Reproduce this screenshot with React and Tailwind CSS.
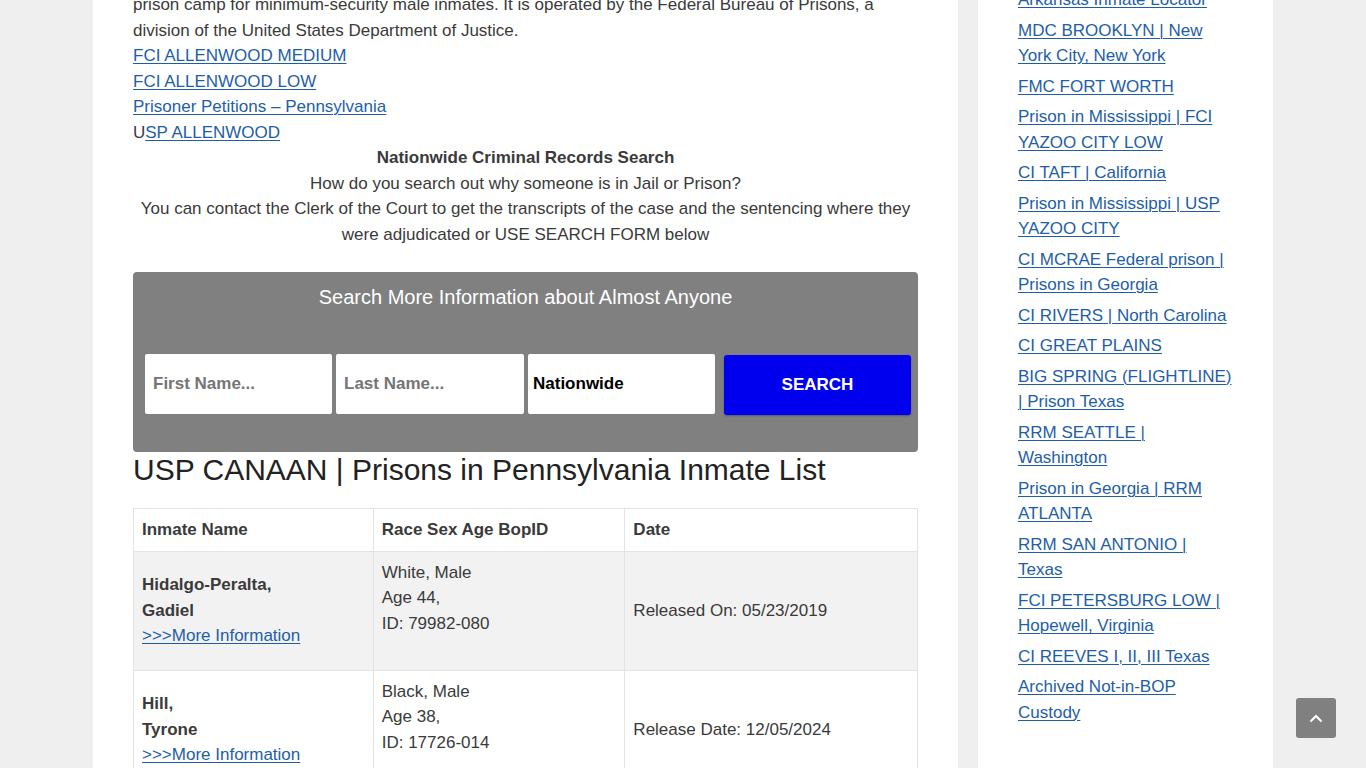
import React from "react";

const sideLinks = [
  "Arkansas Inmate Locator",
  "MDC BROOKLYN | New York City, New York",
  "FMC FORT WORTH",
  "Prison in Mississippi | FCI YAZOO CITY LOW",
  "CI TAFT | California",
  "Prison in Mississippi | USP YAZOO CITY",
  "CI MCRAE Federal prison | Prisons in Georgia",
  "CI RIVERS | North Carolina",
  "CI GREAT PLAINS",
  "BIG SPRING (FLIGHTLINE) | Prison Texas",
  "RRM SEATTLE | Washington",
  "Prison in Georgia | RRM ATLANTA",
  "RRM SAN ANTONIO | Texas",
  "FCI PETERSBURG LOW | Hopewell, Virginia",
  "CI REEVES I, II, III Texas",
  "Archived Not-in-BOP Custody",
];

const rows = [
  {
    last: "Hidalgo-Peralta,",
    first: "Gadiel",
    race: "White, Male",
    age: "Age 44,",
    id: "ID: 79982-080",
    date: "Released On: 05/23/2019",
    bg: "bg-[#f2f2f2]",
  },
  {
    last: "Hill,",
    first: "Tyrone",
    race: "Black, Male",
    age: "Age 38,",
    id: "ID: 17726-014",
    date: "Release Date: 12/05/2024",
    bg: "bg-white",
  },
];

function A({ children }) {
  return (
    <a href="#" className="text-[#1e5ea8] underline underline-offset-[2px] decoration-1">
      {children}
    </a>
  );
}

export default function App() {
  return (
    <div
      className="min-h-screen h-[768px] overflow-hidden bg-[#efefef] text-[17px] leading-[25.5px] text-[#3a3a3a]"
      style={{ fontFamily: '"Liberation Sans", Arial, sans-serif' }}
    >
      <div className="flex gap-[20px] pl-[93px] h-full">
        {/* main column */}
        <main className="w-[865px] shrink-0 bg-white px-[40px] h-full">
          <div className="-mt-[8px]">
            <p>
              prison camp for minimum-security male inmates. It is operated by the Federal Bureau of
              Prisons, a division of the United States Department of Justice.
              <br />
              <A>FCI ALLENWOOD MEDIUM </A>
              <br />
              <A>FCI ALLENWOOD LOW</A>
              <br />
              <A>Prisoner Petitions – Pennsylvania</A>
              <br />
              U<A>SP ALLENWOOD</A>
            </p>
            <div className="text-center">
              <strong className="font-bold">Nationwide Criminal Records Search</strong>
              <br />
              How do you search out why someone is in Jail or Prison?
              <br />
              You can contact the Clerk of the Court to get the transcripts of the case and the
              sentencing where they were adjudicated or USE SEARCH FORM below
            </div>

            {/* search box */}
            <div className="mt-[25px] h-[180px] bg-[#808080] rounded-[4px] pt-[12px] pl-[12px]">
              <div className="text-center text-white text-[20px] leading-[26px] pr-[12px]">
                Search More Information about Almost Anyone
              </div>
              <div className="flex mt-[44px] items-start">
                <div className="w-[187px] h-[60px] bg-white rounded-[2px] flex items-center pl-[8px] font-bold text-[#757575]">
                  First Name...
                </div>
                <div className="ml-[4px] w-[188px] h-[60px] bg-white rounded-[2px] flex items-center pl-[8px] font-bold text-[#757575]">
                  Last Name...
                </div>
                <div className="ml-[4px] w-[187px] h-[60px] bg-white rounded-[2px] flex items-center pl-[5px] font-bold text-black">
                  Nationwide
                </div>
                <button className="ml-[9px] mt-[1px] w-[187px] h-[60px] bg-[#0000ee] rounded-[3px] text-white font-bold text-[17px] shadow-[0_1px_2px_rgba(0,0,0,0.3)]">
                  SEARCH
                </button>
              </div>
            </div>

            <h1 className="text-[30px] leading-[36px] text-[#222] font-normal">
              USP CANAAN | Prisons in Pennsylvania Inmate List
            </h1>

            <table className="mt-[20px] w-[785px] border-collapse border border-[#e3e3e3] text-left">
              <colgroup>
                <col className="w-[240px]" />
                <col className="w-[252px]" />
                <col className="w-[293px]" />
              </colgroup>
              <thead>
                <tr>
                  <th className="border border-[#e3e3e3] px-[8px] py-[8px] font-bold">Inmate Name</th>
                  <th className="border border-[#e3e3e3] px-[8px] py-[8px] font-bold">Race Sex Age BopID</th>
                  <th className="border border-[#e3e3e3] px-[8px] py-[8px] font-bold">Date</th>
                </tr>
              </thead>
              <tbody>
                {rows.map((r) => (
                  <tr key={r.id} className={r.bg}>
                    <td className="border border-[#e3e3e3] px-[8px] py-[8px] align-middle">
                      <strong className="font-bold">
                        {r.last}
                        <br />
                        {r.first}
                      </strong>
                      <br />
                      <A>&gt;&gt;&gt;More Information</A>
                    </td>
                    <td className="border border-[#e3e3e3] px-[8px] py-[8px] align-middle">
                      {r.race}
                      <br />
                      {r.age}
                      <br />
                      {r.id}
                      <br />
                      &nbsp;
                    </td>
                    <td className="border border-[#e3e3e3] px-[8px] py-[8px] align-middle">{r.date}</td>
                  </tr>
                ))}
              </tbody>
            </table>
          </div>
        </main>

        {/* sidebar */}
        <aside className="w-[295px] shrink-0 bg-white px-[40px] h-full">
          <ul className="-mt-[13px] flex flex-col gap-[5px]">
            {sideLinks.map((t) => (
              <li key={t}>
                <A>{t}</A>
              </li>
            ))}
          </ul>
        </aside>
      </div>

      <button className="fixed right-[30px] bottom-[30px] w-[40px] h-[40px] bg-[#808080] rounded-[3px] flex items-center justify-center">
        <svg width="14" height="9" viewBox="0 0 14 9" fill="none">
          <path d="M1.5 7.5L7 2l5.5 5.5" stroke="white" strokeWidth="2" />
        </svg>
      </button>
    </div>
  );
}
